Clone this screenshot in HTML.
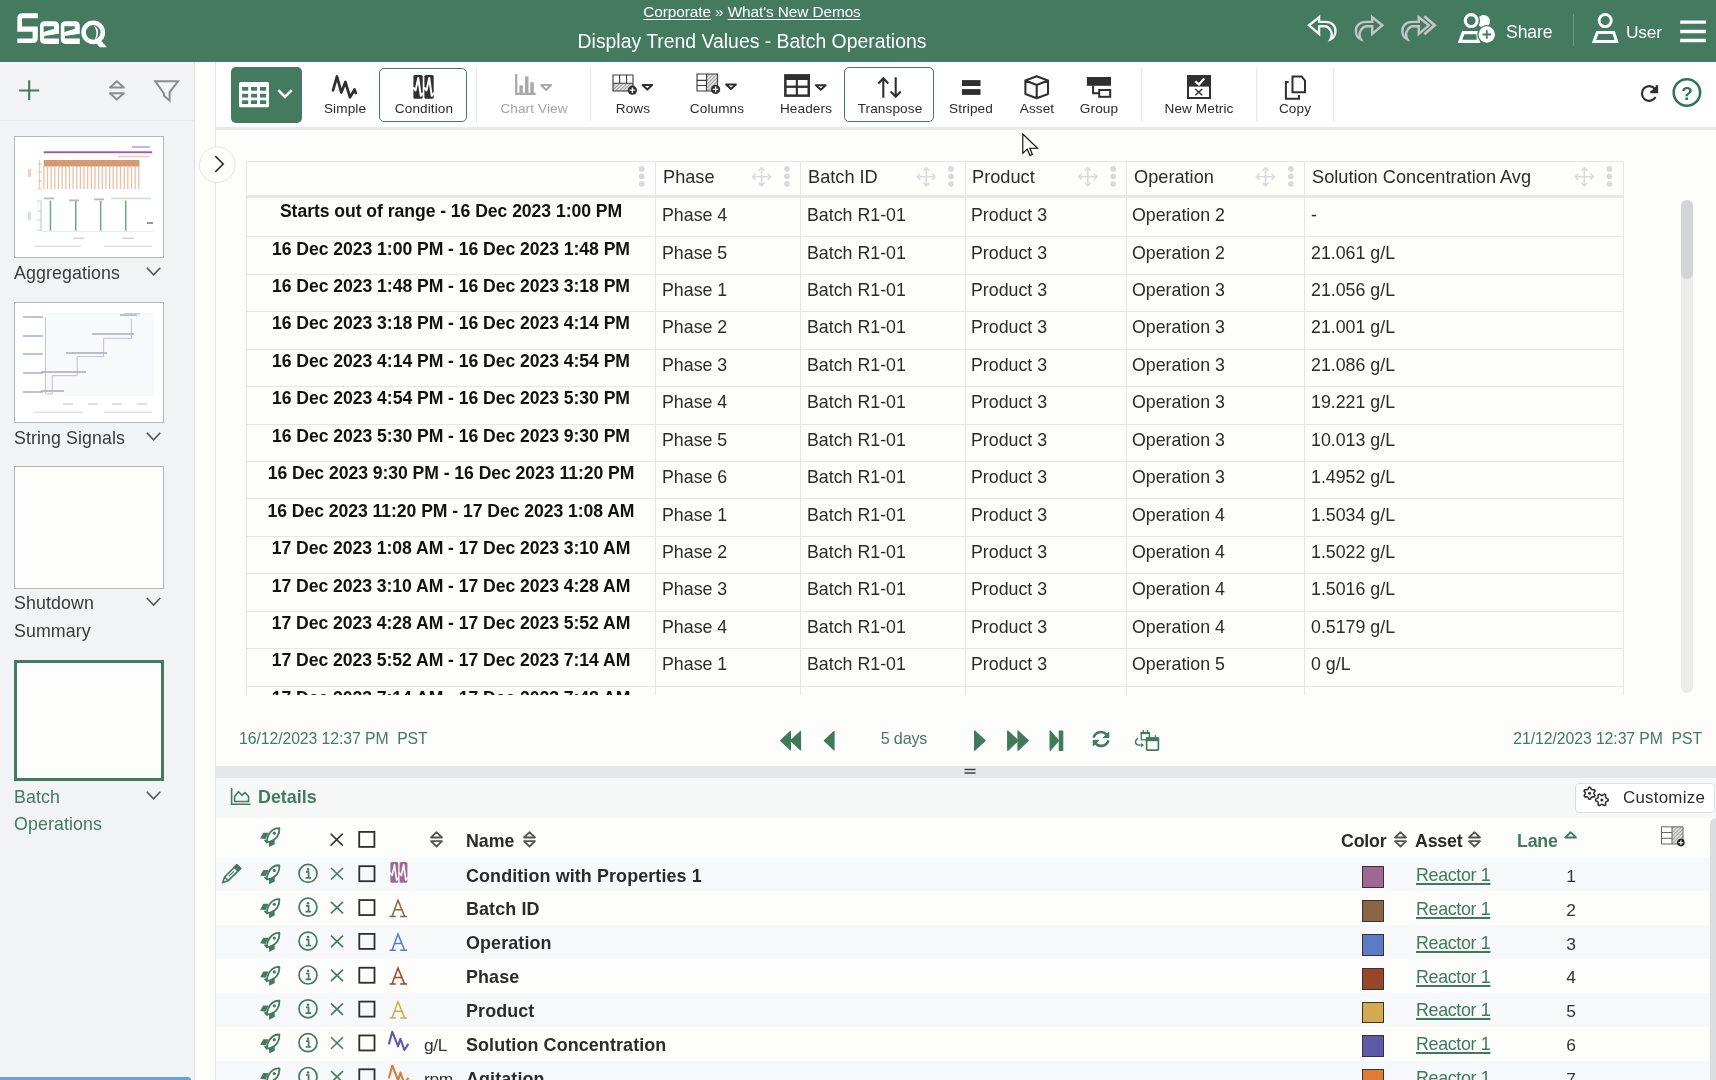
<!DOCTYPE html>
<html><head><meta charset="utf-8">
<style>
*{box-sizing:border-box;margin:0;padding:0}
html,body{width:1716px;height:1080px;overflow:hidden;background:#fdfdfc;font-family:"Liberation Sans",sans-serif;color:#2b2b2b}
.a{position:absolute}
.t{white-space:nowrap;line-height:1;will-change:transform}
u{text-decoration-thickness:1.6px;text-underline-offset:2px;text-decoration-skip-ink:none}
svg{position:absolute;left:0;top:0}
</style></head><body>
<div class="a" style="left:0px;top:0px;width:1716px;height:62px;background:#437a60;"></div>
<div class="a" style="left:0px;top:62px;width:194px;height:1018px;background:#f1f3f5;"></div>
<div class="a" style="left:0px;top:120px;width:194px;height:1px;background:#e8eaec;"></div>
<div class="a" style="left:194px;top:62px;width:1px;height:1018px;background:#dcdee1;"></div>
<div class="a" style="left:195px;top:62px;width:20px;height:1018px;background:#fdfdfc;"></div>
<div class="a" style="left:215px;top:62px;width:1px;height:1018px;background:#e3e5e8;"></div>
<div class="a" style="left:216px;top:62px;width:1500px;height:65px;background:#ffffff;"></div>
<div class="a" style="left:216px;top:127px;width:1500px;height:3px;background:#e8e9eb;"></div>
<div class="a t" style="left:252.00px;width:1000px;text-align:center;top:3.90px;font-size:15.4px;color:#ffffff;letter-spacing:-0.1px;"><u style="text-decoration-thickness:1px">Corporate</u> » <u style="text-decoration-thickness:1px">What's New Demos</u></div>
<div class="a t" style="left:252.00px;width:1000px;text-align:center;top:32.10px;font-size:19.4px;color:#ffffff;">Display Trend Values - Batch Operations</div>
<div class="a t" style="left:1505.60px;top:24.30px;font-size:17.6px;color:#ffffff;letter-spacing:-0.1px;">Share</div>
<div class="a t" style="left:1626.00px;top:24.40px;font-size:17.4px;color:#ffffff;letter-spacing:-0.2px;">User</div>
<div class="a" style="left:1573px;top:14px;width:1px;height:32px;background:#6d9783;"></div>
<div class="a t" style="left:14.40px;top:265.40px;font-size:17.8px;color:#3a3a3a;letter-spacing:0.1px;">Aggregations</div>
<div class="a t" style="left:14.40px;top:430.40px;font-size:17.8px;color:#3a3a3a;letter-spacing:0.1px;">String Signals</div>
<div class="a t" style="left:14.40px;top:595.40px;font-size:17.8px;color:#3a3a3a;letter-spacing:0.1px;">Shutdown</div>
<div class="a t" style="left:14.40px;top:623.40px;font-size:17.8px;color:#3a3a3a;letter-spacing:0.1px;">Summary</div>
<div class="a t" style="left:14.40px;top:788.70px;font-size:17.8px;color:#437a60;letter-spacing:0.1px;">Batch</div>
<div class="a t" style="left:14.40px;top:815.70px;font-size:17.8px;color:#437a60;letter-spacing:0.1px;">Operations</div>
<div class="a" style="left:14px;top:136px;width:150px;height:122px;background:#fff;border:1px solid #b5b7ba"></div>
<div class="a" style="left:14px;top:302px;width:150px;height:121px;background:#fff;border:1px solid #b5b7ba"></div>
<div class="a" style="left:14px;top:466px;width:150px;height:123px;background:#fdfdfc;border:1px solid #b5b7ba"></div>
<div class="a" style="left:14px;top:660px;width:150px;height:121px;background:#fdfdfc;border:3px solid #437a60"></div>
<div class="a" style="left:0px;top:1077px;width:191px;height:3px;background:#63a2e8;border-radius:0 4px 0 0"></div>
<div class="a t" style="left:-155.30px;width:1000px;text-align:center;top:102.00px;font-size:13.6px;color:#2b2b2b;letter-spacing:0.1px;">Simple</div>
<div class="a t" style="left:-76.50px;width:1000px;text-align:center;top:102.00px;font-size:13.6px;color:#2b2b2b;letter-spacing:0.1px;">Condition</div>
<div class="a t" style="left:33.50px;width:1000px;text-align:center;top:102.00px;font-size:13.6px;color:#a5a5a5;letter-spacing:0.1px;">Chart View</div>
<div class="a t" style="left:133.10px;width:1000px;text-align:center;top:102.00px;font-size:13.6px;color:#2b2b2b;letter-spacing:0.1px;">Rows</div>
<div class="a t" style="left:216.70px;width:1000px;text-align:center;top:102.00px;font-size:13.6px;color:#2b2b2b;letter-spacing:0.1px;">Columns</div>
<div class="a t" style="left:305.60px;width:1000px;text-align:center;top:102.00px;font-size:13.6px;color:#2b2b2b;letter-spacing:0.1px;">Headers</div>
<div class="a t" style="left:389.50px;width:1000px;text-align:center;top:102.00px;font-size:13.6px;color:#2b2b2b;letter-spacing:0.1px;">Transpose</div>
<div class="a t" style="left:470.90px;width:1000px;text-align:center;top:102.00px;font-size:13.6px;color:#2b2b2b;letter-spacing:0.1px;">Striped</div>
<div class="a t" style="left:536.50px;width:1000px;text-align:center;top:102.00px;font-size:13.6px;color:#2b2b2b;letter-spacing:0.1px;">Asset</div>
<div class="a t" style="left:599.00px;width:1000px;text-align:center;top:102.00px;font-size:13.6px;color:#2b2b2b;letter-spacing:0.1px;">Group</div>
<div class="a t" style="left:698.50px;width:1000px;text-align:center;top:102.00px;font-size:13.6px;color:#2b2b2b;letter-spacing:0.1px;">New Metric</div>
<div class="a t" style="left:795.00px;width:1000px;text-align:center;top:102.00px;font-size:13.6px;color:#2b2b2b;letter-spacing:0.1px;">Copy</div>
<div class="a" style="left:231px;top:67px;width:71px;height:56px;background:#437a60;border-radius:5px"></div>
<div class="a" style="left:379px;top:68px;width:88px;height:54px;border:1.4px solid #437a60;border-radius:5px"></div>
<div class="a" style="left:844px;top:67px;width:90px;height:55px;border:1.4px solid #437a60;border-radius:5px"></div>
<div class="a" style="left:476px;top:68px;width:1px;height:54px;background:#e6e7e9;"></div>
<div class="a" style="left:590px;top:68px;width:1px;height:54px;background:#e6e7e9;"></div>
<div class="a" style="left:1141px;top:68px;width:1px;height:54px;background:#e6e7e9;"></div>
<div class="a" style="left:1256px;top:68px;width:1px;height:54px;background:#e6e7e9;"></div>
<div class="a" style="left:1333px;top:68px;width:1px;height:54px;background:#e6e7e9;"></div>
<div class="a t" style="left:1187.00px;width:1000px;text-align:center;top:83.90px;font-size:19px;color:#2f7556;font-weight:bold;">?</div>
<div class="a" style="left:0;top:0;width:1716px;height:694.7px;overflow:hidden">
<div class="a" style="left:246px;top:161px;width:1378px;height:34px;border:1px solid #e4e6e9;border-bottom:none;background:#fdfdfc"></div>
<div class="a" style="left:246px;top:195px;width:1378px;height:3px;background:#e6e7e9;"></div>
<div class="a" style="left:246.0px;top:198.0px;width:1px;height:37.43px;background:#e4e6e9;"></div>
<div class="a" style="left:655.0px;top:198.0px;width:1px;height:37.43px;background:#e4e6e9;"></div>
<div class="a" style="left:800.0px;top:198.0px;width:1px;height:37.43px;background:#e4e6e9;"></div>
<div class="a" style="left:965.0px;top:198.0px;width:1px;height:37.43px;background:#e4e6e9;"></div>
<div class="a" style="left:1126.0px;top:198.0px;width:1px;height:37.43px;background:#e4e6e9;"></div>
<div class="a" style="left:1304.0px;top:198.0px;width:1px;height:37.43px;background:#e4e6e9;"></div>
<div class="a" style="left:1623.0px;top:198.0px;width:1px;height:37.43px;background:#e4e6e9;"></div>
<div class="a" style="left:246px;top:236px;width:1378px;height:1px;background:#e4e6e9;"></div>
<div class="a t" style="left:-49.50px;width:1000px;text-align:center;top:203.20px;font-size:17.6px;color:#111;font-weight:bold;letter-spacing:-0.05px;">Starts out of range - 16 Dec 2023 1:00 PM</div>
<div class="a t" style="left:661.50px;top:207.10px;font-size:17.8px;color:#2b2b2b;">Phase 4</div>
<div class="a t" style="left:806.50px;top:207.10px;font-size:17.8px;color:#2b2b2b;">Batch R1-01</div>
<div class="a t" style="left:970.80px;top:207.10px;font-size:17.8px;color:#2b2b2b;">Product 3</div>
<div class="a t" style="left:1132.00px;top:207.10px;font-size:17.8px;color:#2b2b2b;">Operation 2</div>
<div class="a t" style="left:1310.50px;top:207.10px;font-size:17.8px;color:#2b2b2b;">-</div>
<div class="a" style="left:246.0px;top:235.4px;width:1px;height:37.43px;background:#e4e6e9;"></div>
<div class="a" style="left:655.0px;top:235.4px;width:1px;height:37.43px;background:#e4e6e9;"></div>
<div class="a" style="left:800.0px;top:235.4px;width:1px;height:37.43px;background:#e4e6e9;"></div>
<div class="a" style="left:965.0px;top:235.4px;width:1px;height:37.43px;background:#e4e6e9;"></div>
<div class="a" style="left:1126.0px;top:235.4px;width:1px;height:37.43px;background:#e4e6e9;"></div>
<div class="a" style="left:1304.0px;top:235.4px;width:1px;height:37.43px;background:#e4e6e9;"></div>
<div class="a" style="left:1623.0px;top:235.4px;width:1px;height:37.43px;background:#e4e6e9;"></div>
<div class="a" style="left:246px;top:274px;width:1378px;height:1px;background:#e4e6e9;"></div>
<div class="a t" style="left:-49.50px;width:1000px;text-align:center;top:240.63px;font-size:17.6px;color:#111;font-weight:bold;letter-spacing:-0.05px;">16 Dec 2023 1:00 PM - 16 Dec 2023 1:48 PM</div>
<div class="a t" style="left:661.50px;top:244.53px;font-size:17.8px;color:#2b2b2b;">Phase 5</div>
<div class="a t" style="left:806.50px;top:244.53px;font-size:17.8px;color:#2b2b2b;">Batch R1-01</div>
<div class="a t" style="left:970.80px;top:244.53px;font-size:17.8px;color:#2b2b2b;">Product 3</div>
<div class="a t" style="left:1132.00px;top:244.53px;font-size:17.8px;color:#2b2b2b;">Operation 2</div>
<div class="a t" style="left:1310.50px;top:244.53px;font-size:17.8px;color:#2b2b2b;">21.061 g/L</div>
<div class="a" style="left:246.0px;top:272.9px;width:1px;height:37.43px;background:#e4e6e9;"></div>
<div class="a" style="left:655.0px;top:272.9px;width:1px;height:37.43px;background:#e4e6e9;"></div>
<div class="a" style="left:800.0px;top:272.9px;width:1px;height:37.43px;background:#e4e6e9;"></div>
<div class="a" style="left:965.0px;top:272.9px;width:1px;height:37.43px;background:#e4e6e9;"></div>
<div class="a" style="left:1126.0px;top:272.9px;width:1px;height:37.43px;background:#e4e6e9;"></div>
<div class="a" style="left:1304.0px;top:272.9px;width:1px;height:37.43px;background:#e4e6e9;"></div>
<div class="a" style="left:1623.0px;top:272.9px;width:1px;height:37.43px;background:#e4e6e9;"></div>
<div class="a" style="left:246px;top:311px;width:1378px;height:1px;background:#e4e6e9;"></div>
<div class="a t" style="left:-49.50px;width:1000px;text-align:center;top:278.06px;font-size:17.6px;color:#111;font-weight:bold;letter-spacing:-0.05px;">16 Dec 2023 1:48 PM - 16 Dec 2023 3:18 PM</div>
<div class="a t" style="left:661.50px;top:281.96px;font-size:17.8px;color:#2b2b2b;">Phase 1</div>
<div class="a t" style="left:806.50px;top:281.96px;font-size:17.8px;color:#2b2b2b;">Batch R1-01</div>
<div class="a t" style="left:970.80px;top:281.96px;font-size:17.8px;color:#2b2b2b;">Product 3</div>
<div class="a t" style="left:1132.00px;top:281.96px;font-size:17.8px;color:#2b2b2b;">Operation 3</div>
<div class="a t" style="left:1310.50px;top:281.96px;font-size:17.8px;color:#2b2b2b;">21.056 g/L</div>
<div class="a" style="left:246.0px;top:310.3px;width:1px;height:37.43px;background:#e4e6e9;"></div>
<div class="a" style="left:655.0px;top:310.3px;width:1px;height:37.43px;background:#e4e6e9;"></div>
<div class="a" style="left:800.0px;top:310.3px;width:1px;height:37.43px;background:#e4e6e9;"></div>
<div class="a" style="left:965.0px;top:310.3px;width:1px;height:37.43px;background:#e4e6e9;"></div>
<div class="a" style="left:1126.0px;top:310.3px;width:1px;height:37.43px;background:#e4e6e9;"></div>
<div class="a" style="left:1304.0px;top:310.3px;width:1px;height:37.43px;background:#e4e6e9;"></div>
<div class="a" style="left:1623.0px;top:310.3px;width:1px;height:37.43px;background:#e4e6e9;"></div>
<div class="a" style="left:246px;top:349px;width:1378px;height:1px;background:#e4e6e9;"></div>
<div class="a t" style="left:-49.50px;width:1000px;text-align:center;top:315.49px;font-size:17.6px;color:#111;font-weight:bold;letter-spacing:-0.05px;">16 Dec 2023 3:18 PM - 16 Dec 2023 4:14 PM</div>
<div class="a t" style="left:661.50px;top:319.39px;font-size:17.8px;color:#2b2b2b;">Phase 2</div>
<div class="a t" style="left:806.50px;top:319.39px;font-size:17.8px;color:#2b2b2b;">Batch R1-01</div>
<div class="a t" style="left:970.80px;top:319.39px;font-size:17.8px;color:#2b2b2b;">Product 3</div>
<div class="a t" style="left:1132.00px;top:319.39px;font-size:17.8px;color:#2b2b2b;">Operation 3</div>
<div class="a t" style="left:1310.50px;top:319.39px;font-size:17.8px;color:#2b2b2b;">21.001 g/L</div>
<div class="a" style="left:246.0px;top:347.7px;width:1px;height:37.43px;background:#e4e6e9;"></div>
<div class="a" style="left:655.0px;top:347.7px;width:1px;height:37.43px;background:#e4e6e9;"></div>
<div class="a" style="left:800.0px;top:347.7px;width:1px;height:37.43px;background:#e4e6e9;"></div>
<div class="a" style="left:965.0px;top:347.7px;width:1px;height:37.43px;background:#e4e6e9;"></div>
<div class="a" style="left:1126.0px;top:347.7px;width:1px;height:37.43px;background:#e4e6e9;"></div>
<div class="a" style="left:1304.0px;top:347.7px;width:1px;height:37.43px;background:#e4e6e9;"></div>
<div class="a" style="left:1623.0px;top:347.7px;width:1px;height:37.43px;background:#e4e6e9;"></div>
<div class="a" style="left:246px;top:386px;width:1378px;height:1px;background:#e4e6e9;"></div>
<div class="a t" style="left:-49.50px;width:1000px;text-align:center;top:352.92px;font-size:17.6px;color:#111;font-weight:bold;letter-spacing:-0.05px;">16 Dec 2023 4:14 PM - 16 Dec 2023 4:54 PM</div>
<div class="a t" style="left:661.50px;top:356.82px;font-size:17.8px;color:#2b2b2b;">Phase 3</div>
<div class="a t" style="left:806.50px;top:356.82px;font-size:17.8px;color:#2b2b2b;">Batch R1-01</div>
<div class="a t" style="left:970.80px;top:356.82px;font-size:17.8px;color:#2b2b2b;">Product 3</div>
<div class="a t" style="left:1132.00px;top:356.82px;font-size:17.8px;color:#2b2b2b;">Operation 3</div>
<div class="a t" style="left:1310.50px;top:356.82px;font-size:17.8px;color:#2b2b2b;">21.086 g/L</div>
<div class="a" style="left:246.0px;top:385.1px;width:1px;height:37.43px;background:#e4e6e9;"></div>
<div class="a" style="left:655.0px;top:385.1px;width:1px;height:37.43px;background:#e4e6e9;"></div>
<div class="a" style="left:800.0px;top:385.1px;width:1px;height:37.43px;background:#e4e6e9;"></div>
<div class="a" style="left:965.0px;top:385.1px;width:1px;height:37.43px;background:#e4e6e9;"></div>
<div class="a" style="left:1126.0px;top:385.1px;width:1px;height:37.43px;background:#e4e6e9;"></div>
<div class="a" style="left:1304.0px;top:385.1px;width:1px;height:37.43px;background:#e4e6e9;"></div>
<div class="a" style="left:1623.0px;top:385.1px;width:1px;height:37.43px;background:#e4e6e9;"></div>
<div class="a" style="left:246px;top:424px;width:1378px;height:1px;background:#e4e6e9;"></div>
<div class="a t" style="left:-49.50px;width:1000px;text-align:center;top:390.35px;font-size:17.6px;color:#111;font-weight:bold;letter-spacing:-0.05px;">16 Dec 2023 4:54 PM - 16 Dec 2023 5:30 PM</div>
<div class="a t" style="left:661.50px;top:394.25px;font-size:17.8px;color:#2b2b2b;">Phase 4</div>
<div class="a t" style="left:806.50px;top:394.25px;font-size:17.8px;color:#2b2b2b;">Batch R1-01</div>
<div class="a t" style="left:970.80px;top:394.25px;font-size:17.8px;color:#2b2b2b;">Product 3</div>
<div class="a t" style="left:1132.00px;top:394.25px;font-size:17.8px;color:#2b2b2b;">Operation 3</div>
<div class="a t" style="left:1310.50px;top:394.25px;font-size:17.8px;color:#2b2b2b;">19.221 g/L</div>
<div class="a" style="left:246.0px;top:422.6px;width:1px;height:37.43px;background:#e4e6e9;"></div>
<div class="a" style="left:655.0px;top:422.6px;width:1px;height:37.43px;background:#e4e6e9;"></div>
<div class="a" style="left:800.0px;top:422.6px;width:1px;height:37.43px;background:#e4e6e9;"></div>
<div class="a" style="left:965.0px;top:422.6px;width:1px;height:37.43px;background:#e4e6e9;"></div>
<div class="a" style="left:1126.0px;top:422.6px;width:1px;height:37.43px;background:#e4e6e9;"></div>
<div class="a" style="left:1304.0px;top:422.6px;width:1px;height:37.43px;background:#e4e6e9;"></div>
<div class="a" style="left:1623.0px;top:422.6px;width:1px;height:37.43px;background:#e4e6e9;"></div>
<div class="a" style="left:246px;top:461px;width:1378px;height:1px;background:#e4e6e9;"></div>
<div class="a t" style="left:-49.50px;width:1000px;text-align:center;top:427.78px;font-size:17.6px;color:#111;font-weight:bold;letter-spacing:-0.05px;">16 Dec 2023 5:30 PM - 16 Dec 2023 9:30 PM</div>
<div class="a t" style="left:661.50px;top:431.68px;font-size:17.8px;color:#2b2b2b;">Phase 5</div>
<div class="a t" style="left:806.50px;top:431.68px;font-size:17.8px;color:#2b2b2b;">Batch R1-01</div>
<div class="a t" style="left:970.80px;top:431.68px;font-size:17.8px;color:#2b2b2b;">Product 3</div>
<div class="a t" style="left:1132.00px;top:431.68px;font-size:17.8px;color:#2b2b2b;">Operation 3</div>
<div class="a t" style="left:1310.50px;top:431.68px;font-size:17.8px;color:#2b2b2b;">10.013 g/L</div>
<div class="a" style="left:246.0px;top:460.0px;width:1px;height:37.43px;background:#e4e6e9;"></div>
<div class="a" style="left:655.0px;top:460.0px;width:1px;height:37.43px;background:#e4e6e9;"></div>
<div class="a" style="left:800.0px;top:460.0px;width:1px;height:37.43px;background:#e4e6e9;"></div>
<div class="a" style="left:965.0px;top:460.0px;width:1px;height:37.43px;background:#e4e6e9;"></div>
<div class="a" style="left:1126.0px;top:460.0px;width:1px;height:37.43px;background:#e4e6e9;"></div>
<div class="a" style="left:1304.0px;top:460.0px;width:1px;height:37.43px;background:#e4e6e9;"></div>
<div class="a" style="left:1623.0px;top:460.0px;width:1px;height:37.43px;background:#e4e6e9;"></div>
<div class="a" style="left:246px;top:498px;width:1378px;height:1px;background:#e4e6e9;"></div>
<div class="a t" style="left:-49.50px;width:1000px;text-align:center;top:465.21px;font-size:17.6px;color:#111;font-weight:bold;letter-spacing:-0.05px;">16 Dec 2023 9:30 PM - 16 Dec 2023 11:20 PM</div>
<div class="a t" style="left:661.50px;top:469.11px;font-size:17.8px;color:#2b2b2b;">Phase 6</div>
<div class="a t" style="left:806.50px;top:469.11px;font-size:17.8px;color:#2b2b2b;">Batch R1-01</div>
<div class="a t" style="left:970.80px;top:469.11px;font-size:17.8px;color:#2b2b2b;">Product 3</div>
<div class="a t" style="left:1132.00px;top:469.11px;font-size:17.8px;color:#2b2b2b;">Operation 3</div>
<div class="a t" style="left:1310.50px;top:469.11px;font-size:17.8px;color:#2b2b2b;">1.4952 g/L</div>
<div class="a" style="left:246.0px;top:497.4px;width:1px;height:37.43px;background:#e4e6e9;"></div>
<div class="a" style="left:655.0px;top:497.4px;width:1px;height:37.43px;background:#e4e6e9;"></div>
<div class="a" style="left:800.0px;top:497.4px;width:1px;height:37.43px;background:#e4e6e9;"></div>
<div class="a" style="left:965.0px;top:497.4px;width:1px;height:37.43px;background:#e4e6e9;"></div>
<div class="a" style="left:1126.0px;top:497.4px;width:1px;height:37.43px;background:#e4e6e9;"></div>
<div class="a" style="left:1304.0px;top:497.4px;width:1px;height:37.43px;background:#e4e6e9;"></div>
<div class="a" style="left:1623.0px;top:497.4px;width:1px;height:37.43px;background:#e4e6e9;"></div>
<div class="a" style="left:246px;top:536px;width:1378px;height:1px;background:#e4e6e9;"></div>
<div class="a t" style="left:-49.50px;width:1000px;text-align:center;top:502.64px;font-size:17.6px;color:#111;font-weight:bold;letter-spacing:-0.05px;">16 Dec 2023 11:20 PM - 17 Dec 2023 1:08 AM</div>
<div class="a t" style="left:661.50px;top:506.54px;font-size:17.8px;color:#2b2b2b;">Phase 1</div>
<div class="a t" style="left:806.50px;top:506.54px;font-size:17.8px;color:#2b2b2b;">Batch R1-01</div>
<div class="a t" style="left:970.80px;top:506.54px;font-size:17.8px;color:#2b2b2b;">Product 3</div>
<div class="a t" style="left:1132.00px;top:506.54px;font-size:17.8px;color:#2b2b2b;">Operation 4</div>
<div class="a t" style="left:1310.50px;top:506.54px;font-size:17.8px;color:#2b2b2b;">1.5034 g/L</div>
<div class="a" style="left:246.0px;top:534.9px;width:1px;height:37.43px;background:#e4e6e9;"></div>
<div class="a" style="left:655.0px;top:534.9px;width:1px;height:37.43px;background:#e4e6e9;"></div>
<div class="a" style="left:800.0px;top:534.9px;width:1px;height:37.43px;background:#e4e6e9;"></div>
<div class="a" style="left:965.0px;top:534.9px;width:1px;height:37.43px;background:#e4e6e9;"></div>
<div class="a" style="left:1126.0px;top:534.9px;width:1px;height:37.43px;background:#e4e6e9;"></div>
<div class="a" style="left:1304.0px;top:534.9px;width:1px;height:37.43px;background:#e4e6e9;"></div>
<div class="a" style="left:1623.0px;top:534.9px;width:1px;height:37.43px;background:#e4e6e9;"></div>
<div class="a" style="left:246px;top:573px;width:1378px;height:1px;background:#e4e6e9;"></div>
<div class="a t" style="left:-49.50px;width:1000px;text-align:center;top:540.07px;font-size:17.6px;color:#111;font-weight:bold;letter-spacing:-0.05px;">17 Dec 2023 1:08 AM - 17 Dec 2023 3:10 AM</div>
<div class="a t" style="left:661.50px;top:543.97px;font-size:17.8px;color:#2b2b2b;">Phase 2</div>
<div class="a t" style="left:806.50px;top:543.97px;font-size:17.8px;color:#2b2b2b;">Batch R1-01</div>
<div class="a t" style="left:970.80px;top:543.97px;font-size:17.8px;color:#2b2b2b;">Product 3</div>
<div class="a t" style="left:1132.00px;top:543.97px;font-size:17.8px;color:#2b2b2b;">Operation 4</div>
<div class="a t" style="left:1310.50px;top:543.97px;font-size:17.8px;color:#2b2b2b;">1.5022 g/L</div>
<div class="a" style="left:246.0px;top:572.3px;width:1px;height:37.43px;background:#e4e6e9;"></div>
<div class="a" style="left:655.0px;top:572.3px;width:1px;height:37.43px;background:#e4e6e9;"></div>
<div class="a" style="left:800.0px;top:572.3px;width:1px;height:37.43px;background:#e4e6e9;"></div>
<div class="a" style="left:965.0px;top:572.3px;width:1px;height:37.43px;background:#e4e6e9;"></div>
<div class="a" style="left:1126.0px;top:572.3px;width:1px;height:37.43px;background:#e4e6e9;"></div>
<div class="a" style="left:1304.0px;top:572.3px;width:1px;height:37.43px;background:#e4e6e9;"></div>
<div class="a" style="left:1623.0px;top:572.3px;width:1px;height:37.43px;background:#e4e6e9;"></div>
<div class="a" style="left:246px;top:611px;width:1378px;height:1px;background:#e4e6e9;"></div>
<div class="a t" style="left:-49.50px;width:1000px;text-align:center;top:577.50px;font-size:17.6px;color:#111;font-weight:bold;letter-spacing:-0.05px;">17 Dec 2023 3:10 AM - 17 Dec 2023 4:28 AM</div>
<div class="a t" style="left:661.50px;top:581.40px;font-size:17.8px;color:#2b2b2b;">Phase 3</div>
<div class="a t" style="left:806.50px;top:581.40px;font-size:17.8px;color:#2b2b2b;">Batch R1-01</div>
<div class="a t" style="left:970.80px;top:581.40px;font-size:17.8px;color:#2b2b2b;">Product 3</div>
<div class="a t" style="left:1132.00px;top:581.40px;font-size:17.8px;color:#2b2b2b;">Operation 4</div>
<div class="a t" style="left:1310.50px;top:581.40px;font-size:17.8px;color:#2b2b2b;">1.5016 g/L</div>
<div class="a" style="left:246.0px;top:609.7px;width:1px;height:37.43px;background:#e4e6e9;"></div>
<div class="a" style="left:655.0px;top:609.7px;width:1px;height:37.43px;background:#e4e6e9;"></div>
<div class="a" style="left:800.0px;top:609.7px;width:1px;height:37.43px;background:#e4e6e9;"></div>
<div class="a" style="left:965.0px;top:609.7px;width:1px;height:37.43px;background:#e4e6e9;"></div>
<div class="a" style="left:1126.0px;top:609.7px;width:1px;height:37.43px;background:#e4e6e9;"></div>
<div class="a" style="left:1304.0px;top:609.7px;width:1px;height:37.43px;background:#e4e6e9;"></div>
<div class="a" style="left:1623.0px;top:609.7px;width:1px;height:37.43px;background:#e4e6e9;"></div>
<div class="a" style="left:246px;top:648px;width:1378px;height:1px;background:#e4e6e9;"></div>
<div class="a t" style="left:-49.50px;width:1000px;text-align:center;top:614.93px;font-size:17.6px;color:#111;font-weight:bold;letter-spacing:-0.05px;">17 Dec 2023 4:28 AM - 17 Dec 2023 5:52 AM</div>
<div class="a t" style="left:661.50px;top:618.83px;font-size:17.8px;color:#2b2b2b;">Phase 4</div>
<div class="a t" style="left:806.50px;top:618.83px;font-size:17.8px;color:#2b2b2b;">Batch R1-01</div>
<div class="a t" style="left:970.80px;top:618.83px;font-size:17.8px;color:#2b2b2b;">Product 3</div>
<div class="a t" style="left:1132.00px;top:618.83px;font-size:17.8px;color:#2b2b2b;">Operation 4</div>
<div class="a t" style="left:1310.50px;top:618.83px;font-size:17.8px;color:#2b2b2b;">0.5179 g/L</div>
<div class="a" style="left:246.0px;top:647.2px;width:1px;height:37.43px;background:#e4e6e9;"></div>
<div class="a" style="left:655.0px;top:647.2px;width:1px;height:37.43px;background:#e4e6e9;"></div>
<div class="a" style="left:800.0px;top:647.2px;width:1px;height:37.43px;background:#e4e6e9;"></div>
<div class="a" style="left:965.0px;top:647.2px;width:1px;height:37.43px;background:#e4e6e9;"></div>
<div class="a" style="left:1126.0px;top:647.2px;width:1px;height:37.43px;background:#e4e6e9;"></div>
<div class="a" style="left:1304.0px;top:647.2px;width:1px;height:37.43px;background:#e4e6e9;"></div>
<div class="a" style="left:1623.0px;top:647.2px;width:1px;height:37.43px;background:#e4e6e9;"></div>
<div class="a" style="left:246px;top:686px;width:1378px;height:1px;background:#e4e6e9;"></div>
<div class="a t" style="left:-49.50px;width:1000px;text-align:center;top:652.36px;font-size:17.6px;color:#111;font-weight:bold;letter-spacing:-0.05px;">17 Dec 2023 5:52 AM - 17 Dec 2023 7:14 AM</div>
<div class="a t" style="left:661.50px;top:656.26px;font-size:17.8px;color:#2b2b2b;">Phase 1</div>
<div class="a t" style="left:806.50px;top:656.26px;font-size:17.8px;color:#2b2b2b;">Batch R1-01</div>
<div class="a t" style="left:970.80px;top:656.26px;font-size:17.8px;color:#2b2b2b;">Product 3</div>
<div class="a t" style="left:1132.00px;top:656.26px;font-size:17.8px;color:#2b2b2b;">Operation 5</div>
<div class="a t" style="left:1310.50px;top:656.26px;font-size:17.8px;color:#2b2b2b;">0 g/L</div>
<div class="a" style="left:246.0px;top:684.6px;width:1px;height:37.43px;background:#e4e6e9;"></div>
<div class="a" style="left:655.0px;top:684.6px;width:1px;height:37.43px;background:#e4e6e9;"></div>
<div class="a" style="left:800.0px;top:684.6px;width:1px;height:37.43px;background:#e4e6e9;"></div>
<div class="a" style="left:965.0px;top:684.6px;width:1px;height:37.43px;background:#e4e6e9;"></div>
<div class="a" style="left:1126.0px;top:684.6px;width:1px;height:37.43px;background:#e4e6e9;"></div>
<div class="a" style="left:1304.0px;top:684.6px;width:1px;height:37.43px;background:#e4e6e9;"></div>
<div class="a" style="left:1623.0px;top:684.6px;width:1px;height:37.43px;background:#e4e6e9;"></div>
<div class="a" style="left:246px;top:723px;width:1378px;height:1px;background:#e4e6e9;"></div>
<div class="a t" style="left:-49.50px;width:1000px;text-align:center;top:689.79px;font-size:17.6px;color:#111;font-weight:bold;letter-spacing:-0.05px;">17 Dec 2023 7:14 AM - 17 Dec 2023 7:48 AM</div>
<div class="a t" style="left:661.50px;top:693.69px;font-size:17.8px;color:#2b2b2b;">Phase 2</div>
<div class="a t" style="left:806.50px;top:693.69px;font-size:17.8px;color:#2b2b2b;">Batch R1-01</div>
<div class="a t" style="left:970.80px;top:693.69px;font-size:17.8px;color:#2b2b2b;">Product 3</div>
<div class="a t" style="left:1132.00px;top:693.69px;font-size:17.8px;color:#2b2b2b;">Operation 5</div>
<div class="a t" style="left:1310.50px;top:693.69px;font-size:17.8px;color:#2b2b2b;">0 g/L</div>
</div>
<div class="a" style="left:246.0px;top:161px;width:1px;height:34px;background:#e4e6e9;"></div>
<div class="a" style="left:655.0px;top:161px;width:1px;height:34px;background:#e4e6e9;"></div>
<div class="a" style="left:800.0px;top:161px;width:1px;height:34px;background:#e4e6e9;"></div>
<div class="a" style="left:965.0px;top:161px;width:1px;height:34px;background:#e4e6e9;"></div>
<div class="a" style="left:1126.0px;top:161px;width:1px;height:34px;background:#e4e6e9;"></div>
<div class="a" style="left:1304.0px;top:161px;width:1px;height:34px;background:#e4e6e9;"></div>
<div class="a" style="left:1623.0px;top:161px;width:1px;height:34px;background:#e4e6e9;"></div>
<div class="a t" style="left:663.00px;top:168.40px;font-size:18.2px;color:#2b2b2b;">Phase</div>
<div class="a t" style="left:807.60px;top:168.40px;font-size:18.2px;color:#2b2b2b;">Batch ID</div>
<div class="a t" style="left:972.40px;top:168.40px;font-size:18.2px;color:#2b2b2b;">Product</div>
<div class="a t" style="left:1133.50px;top:168.40px;font-size:18.2px;color:#2b2b2b;">Operation</div>
<div class="a t" style="left:1311.50px;top:168.40px;font-size:18.2px;color:#2b2b2b;">Solution Concentration Avg</div>
<div class="a" style="left:1681px;top:200px;width:12px;height:493px;background:#ececed;border-radius:6px"></div>
<div class="a" style="left:1681px;top:200px;width:12px;height:79px;background:#d3d4d6;border-radius:6px"></div>
<div class="a t" style="left:238.80px;top:730.60px;font-size:15.8px;color:#437a60;letter-spacing:-0.08px;">16/12/2023 12:37 PM&nbsp;&nbsp;PST</div>
<div class="a t" style="left:701.60px;width:1000px;text-align:right;top:730.60px;font-size:15.8px;color:#437a60;letter-spacing:-0.08px;">21/12/2023 12:37 PM&nbsp;&nbsp;PST</div>
<div class="a t" style="left:404.40px;width:1000px;text-align:center;top:729.50px;font-size:16.2px;color:#437a60;letter-spacing:-0.2px;">5 days</div>
<div class="a" style="left:216px;top:765.5px;width:1500px;height:12px;background:#e6e7e9;"></div>
<div class="a" style="left:216px;top:777.5px;width:1500px;height:40px;background:#f6f7f7;"></div>
<div class="a t" style="left:258.40px;top:788.95px;font-size:17.9px;color:#437a60;font-weight:bold;">Details</div>
<div class="a" style="left:1574.7px;top:782.7px;width:140px;height:30px;background:#fff;border:1px solid #dcdee1;border-radius:4px"></div>
<div class="a t" style="left:1623.40px;top:789.85px;font-size:16.9px;color:#2b2b2b;letter-spacing:0.25px;">Customize</div>
<div class="a" style="left:216px;top:817.5px;width:1494px;height:40px;background:#fdfdfc;"></div>
<div class="a t" style="left:466.00px;top:833.00px;font-size:17.8px;color:#2b2b2b;font-weight:bold;">Name</div>
<div class="a t" style="left:1341.00px;top:833.00px;font-size:17.8px;color:#2b2b2b;font-weight:bold;letter-spacing:-0.2px;">Color</div>
<div class="a t" style="left:1415.30px;top:833.00px;font-size:17.8px;color:#2b2b2b;font-weight:bold;letter-spacing:-0.2px;">Asset</div>
<div class="a t" style="left:1516.50px;top:833.00px;font-size:17.8px;color:#437a60;font-weight:bold;letter-spacing:-0.2px;">Lane</div>
<div class="a" style="left:216px;top:857.6px;width:1494px;height:33.9px;background:#f7f8f9;"></div>
<div class="a t" style="left:466.00px;top:867.55px;font-size:17.9px;color:#2b2b2b;font-weight:bold;letter-spacing:0.12px;">Condition with Properties 1</div>
<div class="a" style="left:1362.2px;top:866.2px;width:22.3px;height:21.8px;background:#9e6892;border:1.3px solid #333"></div>
<div class="a t" style="left:1415.60px;top:866.95px;font-size:17.9px;color:#3f7a5c;letter-spacing:-0.35px;"><u style="text-underline-offset:1.5px">Reactor 1</u></div>
<div class="a t" style="left:1071.00px;width:1000px;text-align:center;top:867.80px;font-size:17.4px;color:#333;">1</div>
<div class="a t" style="left:466.00px;top:901.40px;font-size:17.9px;color:#2b2b2b;font-weight:bold;letter-spacing:0.12px;">Batch ID</div>
<div class="a" style="left:1362.2px;top:900.1px;width:22.3px;height:21.8px;background:#8b6443;border:1.3px solid #333"></div>
<div class="a t" style="left:1415.60px;top:900.80px;font-size:17.9px;color:#3f7a5c;letter-spacing:-0.35px;"><u style="text-underline-offset:1.5px">Reactor 1</u></div>
<div class="a t" style="left:1071.00px;width:1000px;text-align:center;top:901.65px;font-size:17.4px;color:#333;">2</div>
<div class="a" style="left:216px;top:925.3px;width:1494px;height:33.9px;background:#f7f8f9;"></div>
<div class="a t" style="left:466.00px;top:935.25px;font-size:17.9px;color:#2b2b2b;font-weight:bold;letter-spacing:0.12px;">Operation</div>
<div class="a" style="left:1362.2px;top:933.9px;width:22.3px;height:21.8px;background:#5b7bc8;border:1.3px solid #333"></div>
<div class="a t" style="left:1415.60px;top:934.65px;font-size:17.9px;color:#3f7a5c;letter-spacing:-0.35px;"><u style="text-underline-offset:1.5px">Reactor 1</u></div>
<div class="a t" style="left:1071.00px;width:1000px;text-align:center;top:935.50px;font-size:17.4px;color:#333;">3</div>
<div class="a t" style="left:466.00px;top:969.10px;font-size:17.9px;color:#2b2b2b;font-weight:bold;letter-spacing:0.12px;">Phase</div>
<div class="a" style="left:1362.2px;top:967.8px;width:22.3px;height:21.8px;background:#9a4527;border:1.3px solid #333"></div>
<div class="a t" style="left:1415.60px;top:968.50px;font-size:17.9px;color:#3f7a5c;letter-spacing:-0.35px;"><u style="text-underline-offset:1.5px">Reactor 1</u></div>
<div class="a t" style="left:1071.00px;width:1000px;text-align:center;top:969.35px;font-size:17.4px;color:#333;">4</div>
<div class="a" style="left:216px;top:993.0px;width:1494px;height:33.9px;background:#f7f8f9;"></div>
<div class="a t" style="left:466.00px;top:1002.95px;font-size:17.9px;color:#2b2b2b;font-weight:bold;letter-spacing:0.12px;">Product</div>
<div class="a" style="left:1362.2px;top:1001.6px;width:22.3px;height:21.8px;background:#d4aa4e;border:1.3px solid #333"></div>
<div class="a t" style="left:1415.60px;top:1002.35px;font-size:17.9px;color:#3f7a5c;letter-spacing:-0.35px;"><u style="text-underline-offset:1.5px">Reactor 1</u></div>
<div class="a t" style="left:1071.00px;width:1000px;text-align:center;top:1003.20px;font-size:17.4px;color:#333;">5</div>
<div class="a t" style="left:466.00px;top:1036.80px;font-size:17.9px;color:#2b2b2b;font-weight:bold;letter-spacing:0.12px;">Solution Concentration</div>
<div class="a t" style="left:424.30px;top:1037.05px;font-size:17.4px;color:#333;letter-spacing:-0.4px;">g/L</div>
<div class="a" style="left:1362.2px;top:1035.4px;width:22.3px;height:21.8px;background:#5e5aa8;border:1.3px solid #333"></div>
<div class="a t" style="left:1415.60px;top:1036.20px;font-size:17.9px;color:#3f7a5c;letter-spacing:-0.35px;"><u style="text-underline-offset:1.5px">Reactor 1</u></div>
<div class="a t" style="left:1071.00px;width:1000px;text-align:center;top:1037.05px;font-size:17.4px;color:#333;">6</div>
<div class="a" style="left:216px;top:1060.7px;width:1494px;height:33.9px;background:#f7f8f9;"></div>
<div class="a t" style="left:466.00px;top:1070.65px;font-size:17.9px;color:#2b2b2b;font-weight:bold;letter-spacing:0.12px;">Agitation</div>
<div class="a t" style="left:424.30px;top:1070.90px;font-size:17.4px;color:#333;letter-spacing:-0.4px;">rpm</div>
<div class="a" style="left:1362.2px;top:1069.3px;width:22.3px;height:21.8px;background:#e07b35;border:1.3px solid #333"></div>
<div class="a t" style="left:1415.60px;top:1070.05px;font-size:17.9px;color:#3f7a5c;letter-spacing:-0.35px;"><u style="text-underline-offset:1.5px">Reactor 1</u></div>
<div class="a t" style="left:1071.00px;width:1000px;text-align:center;top:1070.90px;font-size:17.4px;color:#333;">7</div>
<div class="a" style="left:1710px;top:818px;width:6px;height:262px;background:#dcddde;border-radius:6px 0 0 0"></div>
<svg width="1716" height="1080" viewBox="0 0 1716 1080"><g fill="#fff" fill-rule="evenodd"><path d="M37.8 13.3H22.3Q17.3 13.3 17.3 18.3V31.8H32.6V38.4H17.3V42.9H32.8Q37.8 42.9 37.8 37.9V26.5H22V18.2H37.8Z"/><path d="M44.6 21.2H54.4Q59 21.2 59 25.8V33.8L44.2 35.9V38.4H59V43.9H44.6Q40 43.9 40 39.3V25.8Q40 21.2 44.6 21.2ZM43.6 26.3H54V28.7L43.6 31.9Z"/><path d="M65.4 21.2H75.2Q79.8 21.2 79.8 25.8V33.8L65 35.9V38.4H79.8V43.9H65.4Q60.8 43.9 60.8 39.3V25.8Q60.8 21.2 65.4 21.2ZM64.4 26.3H74.8V28.7L64.4 31.9Z"/></g><circle cx="93.2" cy="32.4" r="9.6" fill="none" stroke="#fff" stroke-width="4.6"/><path d="M99.5 39L107 47.2H99.8L95.5 42.5Z" fill="#fff"/><path d="M92.8 25.2Q98.5 27 98.2 33Q98 37.5 94.8 39.6Q96.6 36.5 96.4 32.5Q96 27.5 92.8 25.2Z" fill="#fff"/>
<path d="M1309.00 25.30L1319.10 17.30V21.90H1325.50C1332.00 21.90 1335.80 26.00 1335.50 31.50C1335.30 35.30 1333.00 38.20 1330.40 39.30C1331.80 36.80 1332.20 33.50 1330.80 30.80C1329.60 28.30 1327.30 26.20 1324.30 26.20H1319.10V33.80Z" fill="none" stroke="#f2f2f2" stroke-width="2.4" stroke-linejoin="miter"/>
<path d="M1382.35 25.30L1372.25 17.30V21.90H1365.85C1359.35 21.90 1355.55 26.00 1355.85 31.50C1356.05 35.30 1358.35 38.20 1360.95 39.30C1359.55 36.80 1359.15 33.50 1360.55 30.80C1361.75 28.30 1364.05 26.20 1367.05 26.20H1372.25V33.80Z" fill="none" stroke="#c4c6c5" stroke-width="2.4" stroke-linejoin="miter"/>
<path d="M1428.85 25.30L1418.75 17.30V21.90H1412.35C1405.85 21.90 1402.05 26.00 1402.35 31.50C1402.55 35.30 1404.85 38.20 1407.45 39.30C1406.05 36.80 1405.65 33.50 1407.05 30.80C1408.25 28.30 1410.55 26.20 1413.55 26.20H1418.75V33.80Z" fill="none" stroke="#c4c6c5" stroke-width="2.4" stroke-linejoin="miter"/><path d="M1424.3 16.3L1434.6 25.3L1424.3 34.3" fill="none" stroke="#c4c6c5" stroke-width="2.8"/>
<circle cx="1483.7" cy="21.3" r="6.3" fill="#fff"/><circle cx="1471.2" cy="20.6" r="8.9" fill="#437a60"/><circle cx="1471.2" cy="20.6" r="5.95" fill="none" stroke="#fff" stroke-width="3.1"/><path d="M1463.2 32.6H1477.8L1478.6 41.4H1460Z" fill="none" stroke="#fff" stroke-width="3.2" stroke-linejoin="miter"/><circle cx="1486.8" cy="34.5" r="9.6" fill="#437a60"/><circle cx="1486.8" cy="34.5" r="8.2" fill="#fff"/><path d="M1486.8 30.2V38.8M1482.5 34.5H1491.1" stroke="#437a60" stroke-width="1.8"/>
<circle cx="1605.2" cy="20.6" r="6.05" fill="none" stroke="#fff" stroke-width="2.9"/><path d="M1597.3 32.55H1613.7L1616.6 41.5H1594Z" fill="none" stroke="#fff" stroke-width="3" stroke-linejoin="miter"/>
<path d="M1680.2 22.2H1706M1680.2 31.5H1706M1680.2 40.5H1706" stroke="#fff" stroke-width="3.3"/>
<path d="M19.2 90.5H39.2M29.2 80.3V99.9" stroke="#437a60" stroke-width="2.1"/>
<path d="M110 87.5L116.8 81.2L123.8 87.5ZM110 93.2L116.8 99.5L123.8 93.2Z" fill="none" stroke="#8c8c8c" stroke-width="2" stroke-linejoin="round"/>
<path d="M155.3 81.3H178L169.6 92.3V100.5L164 95.8V93.5Z" fill="none" stroke="#8c8c8c" stroke-width="2" stroke-linejoin="miter"/>
<path d="M146.8 267.8L153.6 274.8L160.3 267.8" fill="none" stroke="#555" stroke-width="1.6"/>
<path d="M146.8 432.8L153.6 439.8L160.3 432.8" fill="none" stroke="#555" stroke-width="1.6"/>
<path d="M146.8 598.0L153.6 605.0L160.3 598.0" fill="none" stroke="#555" stroke-width="1.6"/>
<path d="M146.8 791.8L153.6 798.8L160.3 791.8" fill="none" stroke="#555" stroke-width="1.6"/>
<rect x="132" y="146" width="18" height="2" fill="#c9b6dc"/>
<rect x="43.7" y="151.3" width="108.5" height="1.9" fill="#9f56b3"/>
<rect x="118" y="155.5" width="32" height="2" fill="#ecd3c0"/>
<rect x="43.7" y="160" width="95.8" height="6.5" fill="#d49a72"/>
<path d="M43.9 166V189M47.5 166V189M51.2 166V189M54.8 166V189M58.5 166V189M62.1 166V189M65.8 166V189M69.5 166V189M73.1 166V189M76.8 166V189M80.4 166V189M84.0 166V189M87.7 166V189M91.3 166V189M95.0 166V189M98.7 166V189M102.3 166V189M105.9 166V189M109.6 166V189M113.2 166V189M116.9 166V189M120.5 166V189M124.2 166V189M127.8 166V189M131.5 166V189M135.2 166V189M138.8 166V189" stroke="#e9c2a6" stroke-width="1.3"/>
<path d="M39.5 160V189M38 164H42M38 172H42M38 181H42M38 189H42" stroke="#ecc9b0" stroke-width="1.2"/><rect x="28" y="169" width="3" height="8" fill="#efd2bd"/>
<rect x="49.699999999999996" y="200.7" width="1.5" height="30" fill="#6aaa86"/>
<rect x="75.0" y="200.7" width="1.5" height="30" fill="#6aaa86"/>
<rect x="99.89999999999999" y="200.7" width="1.5" height="30" fill="#6aaa86"/>
<rect x="125.0" y="200.7" width="1.5" height="30" fill="#6aaa86"/>
<rect x="43" y="231" width="110" height="1" fill="#e8eaec"/><path d="M41 201V231M37 201H41M37 211H41M37 220H41M37 230H41" stroke="#b9d9c6" stroke-width="1.2"/><rect x="28" y="212" width="3" height="8" fill="#cfe5d8"/>
<rect x="44" y="197.5" width="10" height="1.8" fill="#b8b8b8"/><rect x="69" y="199.5" width="10" height="1.8" fill="#b8b8b8"/><rect x="94" y="198.5" width="10" height="1.8" fill="#b8b8b8"/><rect x="111" y="197.5" width="40" height="1.8" fill="#cfe3d7"/><rect x="147" y="222" width="6" height="2" fill="#999"/>
<rect x="73" y="237.5" width="11" height="1.6" fill="#d6d6d6"/><rect x="122" y="237.5" width="12" height="1.6" fill="#d6d6d6"/>
<rect x="34" y="245.5" width="47" height="1.5" fill="#e3e3e3"/><rect x="104" y="245.5" width="48" height="1.5" fill="#e3e3e3"/>
<rect x="47" y="313" width="107" height="83" fill="#f8f9fb"/>
<path d="M45.5 317V394H52.3V375.6H77.2V356.6H103.6V338.4H131.4V319" fill="none" stroke="#b5bbdc" stroke-width="0.9"/>
<rect x="23" y="316.2" width="20" height="1.6" fill="#aab2e0"/>
<rect x="23" y="335.2" width="20" height="1.6" fill="#aab2e0"/>
<rect x="23" y="353.2" width="20" height="1.6" fill="#aab2e0"/>
<rect x="23" y="372.2" width="20" height="1.6" fill="#aab2e0"/>
<rect x="23" y="391.2" width="20" height="1.6" fill="#aab2e0"/>
<rect x="41" y="390.2" width="23" height="1.6" fill="#b0b0b0"/>
<rect x="41" y="371.2" width="45" height="1.6" fill="#b0b0b0"/>
<rect x="66" y="352.2" width="41" height="1.6" fill="#b0b0b0"/>
<rect x="92" y="333.2" width="42" height="1.6" fill="#b0b0b0"/>
<rect x="120" y="314.2" width="17" height="1.6" fill="#b0b0b0"/>
<rect x="124" y="313" width="16" height="1.5" fill="#c5cbe8"/>
<rect x="63" y="403.3" width="10" height="1.5" fill="#d8d8d8"/><rect x="88" y="403.3" width="10" height="1.5" fill="#d8d8d8"/><rect x="112" y="403.3" width="10" height="1.5" fill="#d8d8d8"/><rect x="137" y="403.3" width="10" height="1.5" fill="#d8d8d8"/>
<rect x="34" y="411.5" width="49" height="1.5" fill="#e3e3e3"/><rect x="104" y="411.5" width="48" height="1.5" fill="#e3e3e3"/>
<circle cx="217.2" cy="164.7" r="17.8" fill="#fdfdfc" stroke="#e1e3e6" stroke-width="1"/>
<path d="M215.3 156.1L223.2 164L215.3 171.9" fill="none" stroke="#222" stroke-width="1.5"/>
<rect x="239" y="82" width="30" height="25.3" rx="1.5" fill="#fff"/>
<rect x="242.1" y="87" width="6.1" height="3.7" fill="#437a60"/>
<rect x="242.1" y="93.8" width="6.1" height="3.7" fill="#437a60"/>
<rect x="242.1" y="100.3" width="6.1" height="3.7" fill="#437a60"/>
<rect x="251" y="87" width="6.1" height="3.7" fill="#437a60"/>
<rect x="251" y="93.8" width="6.1" height="3.7" fill="#437a60"/>
<rect x="251" y="100.3" width="6.1" height="3.7" fill="#437a60"/>
<rect x="260" y="87" width="6.1" height="3.7" fill="#437a60"/>
<rect x="260" y="93.8" width="6.1" height="3.7" fill="#437a60"/>
<rect x="260" y="100.3" width="6.1" height="3.7" fill="#437a60"/>
<path d="M278.3 90.2L285 96.9L291.7 90.2" fill="none" stroke="#fff" stroke-width="2.6"/>
<path d="M333 90.3L337 76.5L341.3 92.5L345.4 82L350 97.3L354.5 89.5L355.8 93" fill="none" stroke="#2f2f2f" stroke-width="2.7" stroke-linejoin="round" stroke-linecap="round"/>
<rect x="413.4" y="74.9" width="9.3" height="23.8" rx="1.5" fill="#2f2f2f"/><rect x="424.4" y="74.9" width="9.3" height="23.8" rx="1.5" fill="#2f2f2f"/>
<path d="M413.40 87.75 L415.55 90.37 L418.26 77.99 L420.78 95.84 L422.74 93.23" fill="none" stroke="#fff" stroke-width="2" stroke-linejoin="round" stroke-linecap="round"/>
<path d="M424.36 87.75 L426.51 90.37 L429.22 77.99 L431.74 95.84 L433.70 93.23" fill="none" stroke="#fff" stroke-width="2" stroke-linejoin="round" stroke-linecap="round"/>
<path d="M516.2 74V93.8H535.6" fill="none" stroke="#a9a9a9" stroke-width="2.3"/><rect x="519.4" y="85.3" width="3.5" height="7.7" fill="#a9a9a9"/><rect x="525" y="76.4" width="3.5" height="16.6" fill="#a9a9a9"/><rect x="530.3" y="82.3" width="3.5" height="10.7" fill="#a9a9a9"/>
<path d="M541.2 85.0H551.0L546.1 90.0Z" fill="none" stroke="#a9a9a9" stroke-width="2" stroke-linejoin="round"/>
<defs><pattern id="hat" width="2.6" height="2.6" patternUnits="userSpaceOnUse" patternTransform="rotate(45)"><rect width="2.6" height="2.6" fill="#e6e6e6"/><rect width="1" height="2.6" fill="#9a9a9a"/></pattern></defs>
<rect x="613" y="83.2" width="20" height="8" fill="url(#hat)"/><path d="M613 75H633V91H613ZM613 83.2H633M619.6 75V83.2M626.6 75V83.2" fill="none" stroke="#3a3a3a" stroke-width="1.1"/><circle cx="632.4" cy="90.2" r="4.6" fill="#2f2f2f"/><path d="M632.4 87.4V93M629.6 90.2H635.2" stroke="#fff" stroke-width="1.3"/>
<path d="M642.5 85.1H652.1L647.3 89.6Z" fill="none" stroke="#2f2f2f" stroke-width="2" stroke-linejoin="round"/>
<rect x="706.5" y="74" width="11" height="17" fill="url(#hat)"/><path d="M697 74H717.5V91H697ZM706.5 74V91M697 80.4H706.5M697 85.5H706.5" fill="none" stroke="#3a3a3a" stroke-width="1.1"/><circle cx="715.6" cy="89.4" r="4.6" fill="#2f2f2f"/><path d="M715.6 86.6V92.2M712.8 89.4H718.4" stroke="#fff" stroke-width="1.3"/>
<path d="M726.1 84.5H735.9L731.0 88.9Z" fill="none" stroke="#2f2f2f" stroke-width="2" stroke-linejoin="round"/>
<rect x="784.1" y="74.1" width="25.9" height="22.8" fill="#2f2f2f"/><rect x="786.6" y="80" width="9.2" height="5.6" fill="#fff"/><rect x="797.9" y="80" width="9.6" height="5.6" fill="#fff"/><rect x="786.6" y="87.9" width="9.2" height="6.5" fill="#fff"/><rect x="797.9" y="87.9" width="9.6" height="6.5" fill="#fff"/>
<path d="M815.9 85.2H825.6L820.8 89.7Z" fill="none" stroke="#2f2f2f" stroke-width="2" stroke-linejoin="round"/>
<path d="M883.3 97.8V78.5M878.3 83.5L883.3 78.3L888.3 83.5M895.7 77.3V96.6M890.7 91.6L895.7 96.8L900.7 91.6" fill="none" stroke="#2f2f2f" stroke-width="2.1"/>
<rect x="962" y="80.1" width="18.5" height="5.9" fill="#2f2f2f"/><rect x="962" y="89.1" width="18.5" height="5.8" fill="#2f2f2f"/>
<path d="M1036.7 76.3L1048 80.6V94L1036.7 98.2L1025.4 94V80.6ZM1025.4 80.6L1036.7 85L1048 80.6M1036.7 85V98.2" fill="none" stroke="#2f2f2f" stroke-width="2.1" stroke-linejoin="round"/>
<rect x="1086.9" y="77" width="24.1" height="8.8" fill="#2f2f2f"/><path d="M1093.1 85.8V93.2H1099" fill="none" stroke="#2f2f2f" stroke-width="2"/><rect x="1099.2" y="90" width="11" height="6.8" fill="none" stroke="#2f2f2f" stroke-width="2"/>
<rect x="1188" y="76.2" width="22" height="21.8" fill="none" stroke="#2f2f2f" stroke-width="2"/><rect x="1187" y="75.2" width="24" height="11.4" fill="#2f2f2f"/><path d="M1195.3 81.3L1199 84.4L1204.2 78.6" fill="none" stroke="#fff" stroke-width="2.2"/><path d="M1195.3 89L1202.2 95.3M1202.2 89L1195.3 95.3" stroke="#2f2f2f" stroke-width="1.5"/>
<path d="M1292.5 76.4H1301.5L1305 80.5V92.2H1292.5Z" fill="none" stroke="#2f2f2f" stroke-width="2" stroke-linejoin="miter"/><path d="M1288.7 82H1285.9V98.7H1299V95" fill="none" stroke="#2f2f2f" stroke-width="2"/>
<path d="M1655 89A7.3 7.3 0 1 0 1655.6 97" fill="none" stroke="#2f2f2f" stroke-width="2.2"/><path d="M1657 85.3V92H1650.3" fill="none" stroke="#2f2f2f" stroke-width="2.3"/><path d="M1657 85.3L1657 92L1650.3 92Z" fill="#2f2f2f"/>
<circle cx="1686.9" cy="92.5" r="13.2" fill="none" stroke="#2f7556" stroke-width="2.6"/>
<path d="M1022.8 134.1V153.3L1027.3 149.2L1030 155.5L1032.4 154.5L1029.8 148.3H1037.6Z" fill="#fff" stroke="#000" stroke-width="1.1" stroke-linejoin="miter"/>
<circle cx="641.7" cy="168.8" r="2.9" fill="#d9dadd"/><circle cx="641.7" cy="176.3" r="2.9" fill="#d9dadd"/><circle cx="641.7" cy="183.8" r="2.9" fill="#d9dadd"/>
<path d="M752.6 176.8H770.6M761.6 167.8V185.8M755.6 173.8L752.6 176.8L755.6 179.8M767.6 173.8L770.6 176.8L767.6 179.8M758.6 170.8L761.6 167.8L764.6 170.8M758.6 182.8L761.6 185.8L764.6 182.8" fill="none" stroke="#dadbde" stroke-width="1.6"/>
<circle cx="787" cy="168.8" r="2.9" fill="#d9dadd"/><circle cx="787" cy="176.3" r="2.9" fill="#d9dadd"/><circle cx="787" cy="183.8" r="2.9" fill="#d9dadd"/>
<path d="M917.2 176.8H935.2M926.2 167.8V185.8M920.2 173.8L917.2 176.8L920.2 179.8M932.2 173.8L935.2 176.8L932.2 179.8M923.2 170.8L926.2 167.8L929.2 170.8M923.2 182.8L926.2 185.8L929.2 182.8" fill="none" stroke="#dadbde" stroke-width="1.6"/>
<circle cx="951" cy="168.8" r="2.9" fill="#d9dadd"/><circle cx="951" cy="176.3" r="2.9" fill="#d9dadd"/><circle cx="951" cy="183.8" r="2.9" fill="#d9dadd"/>
<path d="M1078.8 176.8H1096.8M1087.8 167.8V185.8M1081.8 173.8L1078.8 176.8L1081.8 179.8M1093.8 173.8L1096.8 176.8L1093.8 179.8M1084.8 170.8L1087.8 167.8L1090.8 170.8M1084.8 182.8L1087.8 185.8L1090.8 182.8" fill="none" stroke="#dadbde" stroke-width="1.6"/>
<circle cx="1113.2" cy="168.8" r="2.9" fill="#d9dadd"/><circle cx="1113.2" cy="176.3" r="2.9" fill="#d9dadd"/><circle cx="1113.2" cy="183.8" r="2.9" fill="#d9dadd"/>
<path d="M1256.5 176.8H1274.5M1265.5 167.8V185.8M1259.5 173.8L1256.5 176.8L1259.5 179.8M1271.5 173.8L1274.5 176.8L1271.5 179.8M1262.5 170.8L1265.5 167.8L1268.5 170.8M1262.5 182.8L1265.5 185.8L1268.5 182.8" fill="none" stroke="#dadbde" stroke-width="1.6"/>
<circle cx="1290.8" cy="168.8" r="2.9" fill="#d9dadd"/><circle cx="1290.8" cy="176.3" r="2.9" fill="#d9dadd"/><circle cx="1290.8" cy="183.8" r="2.9" fill="#d9dadd"/>
<path d="M1575.3 176.8H1593.3M1584.3 167.8V185.8M1578.3 173.8L1575.3 176.8L1578.3 179.8M1590.3 173.8L1593.3 176.8L1590.3 179.8M1581.3 170.8L1584.3 167.8L1587.3 170.8M1581.3 182.8L1584.3 185.8L1587.3 182.8" fill="none" stroke="#dadbde" stroke-width="1.6"/>
<circle cx="1609.4" cy="168.8" r="2.9" fill="#d9dadd"/><circle cx="1609.4" cy="176.3" r="2.9" fill="#d9dadd"/><circle cx="1609.4" cy="183.8" r="2.9" fill="#d9dadd"/>
<g fill="#3f7a5c" stroke="#3f7a5c" stroke-width="1.2" stroke-linejoin="round"><path d="M780.6 740.6L790.4 731.4V749.9Z"/><path d="M790.7 740.6L800.5 731.4V749.9Z"/><path d="M824.3 740.6L834 731.4V749.9Z"/><path d="M985.2 740.6L974.6 731V750.3Z"/><path d="M1018 740.6L1007.7 731V750.3Z"/><path d="M1028.3 740.6L1018 731V750.3Z"/><path d="M1058.6 740.6L1050.1 731V750.3Z"/><rect x="1059.3" y="731" width="3.4" height="19.3"/></g>
<path d="M1093.6 737.6A7.6 7.6 0 0 1 1106.6 734.6M1108.4 740.3A7.6 7.6 0 0 1 1095.4 743.3" fill="none" stroke="#3f7a5c" stroke-width="2.6"/><path d="M1108.8 732.2V737.7H1103.3Z M1093.2 746V740.3H1098.8Z" fill="#3f7a5c" stroke="#3f7a5c" stroke-width="1"/>
<rect x="1141.3" y="732.6" width="8" height="7.2" fill="none" stroke="#3f7a5c" stroke-width="1.3"/><rect x="1140.6" y="731.9" width="9.2" height="2.2" fill="#3f7a5c"/><path d="M1143.3 730V732M1147.5 730V732" stroke="#3f7a5c" stroke-width="1.2"/><rect x="1146.6" y="738.2" width="11.8" height="11.9" rx="1" fill="#fdfdfc" stroke="#3f7a5c" stroke-width="1.7"/><rect x="1145.8" y="737.3" width="13.3" height="3.9" fill="#3f7a5c"/><path d="M1149.6 735.2V737.5M1155.4 735.2V737.5" stroke="#3f7a5c" stroke-width="1.4"/><path d="M1138 738.3Q1134.6 740.5 1135.8 743.5Q1137 745.3 1140 745.1H1142" fill="none" stroke="#3f7a5c" stroke-width="1.4"/><path d="M1144 745.1L1141.2 743V747.2Z" fill="#3f7a5c"/>
<path d="M964.5 769.5H975.5M964.5 773H975.5" stroke="#444" stroke-width="1.4"/>
<path d="M231.6 788V804.2H250.5" fill="none" stroke="#437a60" stroke-width="1.6"/><path d="M234.6 801.5V796.5L238.5 791.7L242 795.3L245 792.5L248.6 796.5V801.5Z" fill="none" stroke="#437a60" stroke-width="1.6" stroke-linejoin="round"/>
<path d="M1588.82 787.35 L1590.38 787.35 L1591.25 789.31 L1592.23 789.87 L1594.36 789.65 L1595.14 791.00 L1593.88 792.74 L1593.88 793.86 L1595.14 795.60 L1594.36 796.95 L1592.23 796.73 L1591.25 797.29 L1590.38 799.25 L1588.82 799.25 L1587.95 797.29 L1586.97 796.73 L1584.84 796.95 L1584.06 795.60 L1585.32 793.86 L1585.32 792.74 L1584.06 791.00 L1584.84 789.65 L1586.97 789.87 L1587.95 789.31Z" fill="#fff" stroke="#2e2e2e" stroke-width="1.5" stroke-linejoin="round"/><circle cx="1589.6" cy="793.3" r="1.5" fill="#2e2e2e"/>
<path d="M1608.15 799.08 L1608.15 800.72 L1606.09 801.64 L1605.50 802.66 L1605.74 804.90 L1604.31 805.72 L1602.49 804.40 L1601.31 804.40 L1599.49 805.72 L1598.06 804.90 L1598.30 802.66 L1597.71 801.64 L1595.65 800.72 L1595.65 799.08 L1597.71 798.16 L1598.30 797.14 L1598.06 794.90 L1599.49 794.08 L1601.31 795.40 L1602.49 795.40 L1604.31 794.08 L1605.74 794.90 L1605.50 797.14 L1606.09 798.16Z" fill="#fff" stroke="#2e2e2e" stroke-width="1.5" stroke-linejoin="round"/><circle cx="1601.9" cy="799.9" r="1.5" fill="#2e2e2e"/>
<g transform="translate(255,822.8)"><path d="M11.8 19.3Q12.3 11.5 17.5 7.3Q20.5 5 24.4 5.3Q24.8 9.8 22.3 13.7Q18.8 18.6 11.8 19.3Z" fill="#fdfdfc" stroke="#437a60" stroke-width="1.8" stroke-linejoin="round"/><circle cx="19.3" cy="10.4" r="1.6" fill="#437a60"/><path d="M8.3 10H13.6L10.6 16.3L5.2 15.6Z" fill="#437a60"/><path d="M13.9 19.3L19.6 16.3L19.8 21.4L14.2 24.3Z" fill="#437a60"/><path d="M9.6 17L12.4 20" stroke="#437a60" stroke-width="1.8"/></g>
<path d="M330.6 833.6L342.8 845.6M342.8 833.6L330.6 845.6" stroke="#333" stroke-width="1.5"/>
<rect x="359.2" y="831.9" width="15.2" height="15.0" fill="none" stroke="#2e2e2e" stroke-width="1.8"/>
<path d="M431 837.5L436.5 832.2L442 837.5ZM431 841.2L436.5 846.5L442 841.2Z" fill="none" stroke="#555" stroke-width="1.8" stroke-linejoin="round"/>
<path d="M524 837.5L529.5 832.2L535 837.5ZM524 841.2L529.5 846.5L535 841.2Z" fill="none" stroke="#555" stroke-width="1.8" stroke-linejoin="round"/>
<path d="M1395 837.5L1400.5 832.2L1406 837.5ZM1395 841.2L1400.5 846.5L1406 841.2Z" fill="none" stroke="#555" stroke-width="1.8" stroke-linejoin="round"/>
<path d="M1469 837.5L1474.5 832.2L1480 837.5ZM1469 841.2L1474.5 846.5L1480 841.2Z" fill="none" stroke="#555" stroke-width="1.8" stroke-linejoin="round"/>
<path d="M1565.3 837.5L1570.6 832.2L1576 837.5Z" fill="none" stroke="#437a60" stroke-width="1.8" stroke-linejoin="round"/>
<rect x="1672" y="827" width="11" height="17" fill="url(#hat)"/><path d="M1661.5 826.8H1683V844H1661.5ZM1672 826.8V844M1661.5 832.5H1672M1661.5 838.3H1672" fill="none" stroke="#666" stroke-width="1"/><circle cx="1680.9" cy="842.6" r="3.8" fill="#222"/><path d="M1680.9 840.3V844.9M1678.6 842.6H1683.2" stroke="#fff" stroke-width="1.1"/>
<g transform="translate(255,860.0)"><path d="M11.8 19.3Q12.3 11.5 17.5 7.3Q20.5 5 24.4 5.3Q24.8 9.8 22.3 13.7Q18.8 18.6 11.8 19.3Z" fill="#fdfdfc" stroke="#437a60" stroke-width="1.8" stroke-linejoin="round"/><circle cx="19.3" cy="10.4" r="1.6" fill="#437a60"/><path d="M8.3 10H13.6L10.6 16.3L5.2 15.6Z" fill="#437a60"/><path d="M13.9 19.3L19.6 16.3L19.8 21.4L14.2 24.3Z" fill="#437a60"/><path d="M9.6 17L12.4 20" stroke="#437a60" stroke-width="1.8"/></g>
<circle cx="308" cy="873.4" r="9" fill="none" stroke="#437a60" stroke-width="1.7"/><circle cx="308" cy="869.4" r="1.3" fill="#437a60"/><path d="M306 871.9H308.6V877.7M305.6 877.8H311" fill="none" stroke="#437a60" stroke-width="1.7"/>
<path d="M331 868.0L343 879.5M343 868.0L331 879.5" stroke="#437a60" stroke-width="1.6"/>
<rect x="359.29999999999995" y="866.1999999999999" width="15.2" height="15.0" fill="none" stroke="#2e2e2e" stroke-width="1.8"/>
<rect x="390.4" y="861.9" width="7.8" height="20.8" rx="1.5" fill="#9e6892"/><rect x="399.6" y="861.9" width="7.8" height="20.8" rx="1.5" fill="#9e6892"/>
<path d="M390.40 873.13 L392.20 875.42 L394.47 864.60 L396.58 880.20 L398.22 877.92" fill="none" stroke="#fff" stroke-width="1.6" stroke-linejoin="round" stroke-linecap="round"/>
<path d="M399.58 873.13 L401.38 875.42 L403.65 864.60 L405.76 880.20 L407.40 877.92" fill="none" stroke="#fff" stroke-width="1.6" stroke-linejoin="round" stroke-linecap="round"/>
<g transform="translate(255,893.85)"><path d="M11.8 19.3Q12.3 11.5 17.5 7.3Q20.5 5 24.4 5.3Q24.8 9.8 22.3 13.7Q18.8 18.6 11.8 19.3Z" fill="#fdfdfc" stroke="#437a60" stroke-width="1.8" stroke-linejoin="round"/><circle cx="19.3" cy="10.4" r="1.6" fill="#437a60"/><path d="M8.3 10H13.6L10.6 16.3L5.2 15.6Z" fill="#437a60"/><path d="M13.9 19.3L19.6 16.3L19.8 21.4L14.2 24.3Z" fill="#437a60"/><path d="M9.6 17L12.4 20" stroke="#437a60" stroke-width="1.8"/></g>
<circle cx="308" cy="907.2" r="9" fill="none" stroke="#437a60" stroke-width="1.7"/><circle cx="308" cy="903.2" r="1.3" fill="#437a60"/><path d="M306 905.8H308.6V911.6M305.6 911.6H311" fill="none" stroke="#437a60" stroke-width="1.7"/>
<path d="M331 901.85L343 913.35M343 901.85L331 913.35" stroke="#437a60" stroke-width="1.6"/>
<rect x="359.29999999999995" y="900.05" width="15.2" height="15.0" fill="none" stroke="#2e2e2e" stroke-width="1.8"/>
<path d="M389.5 916.4H395.8M400.2 916.4H407M392 916.4L398 900.3L404.6 916.4M394 909.7H402.4" fill="none" stroke="#8b6443" stroke-width="1.5"/>
<g transform="translate(255,927.7)"><path d="M11.8 19.3Q12.3 11.5 17.5 7.3Q20.5 5 24.4 5.3Q24.8 9.8 22.3 13.7Q18.8 18.6 11.8 19.3Z" fill="#fdfdfc" stroke="#437a60" stroke-width="1.8" stroke-linejoin="round"/><circle cx="19.3" cy="10.4" r="1.6" fill="#437a60"/><path d="M8.3 10H13.6L10.6 16.3L5.2 15.6Z" fill="#437a60"/><path d="M13.9 19.3L19.6 16.3L19.8 21.4L14.2 24.3Z" fill="#437a60"/><path d="M9.6 17L12.4 20" stroke="#437a60" stroke-width="1.8"/></g>
<circle cx="308" cy="941.1" r="9" fill="none" stroke="#437a60" stroke-width="1.7"/><circle cx="308" cy="937.1" r="1.3" fill="#437a60"/><path d="M306 939.6H308.6V945.4M305.6 945.5H311" fill="none" stroke="#437a60" stroke-width="1.7"/>
<path d="M331 935.7L343 947.2M343 935.7L331 947.2" stroke="#437a60" stroke-width="1.6"/>
<rect x="359.29999999999995" y="933.9" width="15.2" height="15.0" fill="none" stroke="#2e2e2e" stroke-width="1.8"/>
<path d="M389.5 950.2H395.8M400.2 950.2H407M392 950.2L398 934.1L404.6 950.2M394 943.6H402.4" fill="none" stroke="#5b7bc8" stroke-width="1.5"/>
<g transform="translate(255,961.55)"><path d="M11.8 19.3Q12.3 11.5 17.5 7.3Q20.5 5 24.4 5.3Q24.8 9.8 22.3 13.7Q18.8 18.6 11.8 19.3Z" fill="#fdfdfc" stroke="#437a60" stroke-width="1.8" stroke-linejoin="round"/><circle cx="19.3" cy="10.4" r="1.6" fill="#437a60"/><path d="M8.3 10H13.6L10.6 16.3L5.2 15.6Z" fill="#437a60"/><path d="M13.9 19.3L19.6 16.3L19.8 21.4L14.2 24.3Z" fill="#437a60"/><path d="M9.6 17L12.4 20" stroke="#437a60" stroke-width="1.8"/></g>
<circle cx="308" cy="975.0" r="9" fill="none" stroke="#437a60" stroke-width="1.7"/><circle cx="308" cy="971.0" r="1.3" fill="#437a60"/><path d="M306 973.5H308.6V979.2M305.6 979.3H311" fill="none" stroke="#437a60" stroke-width="1.7"/>
<path d="M331 969.55L343 981.05M343 969.55L331 981.05" stroke="#437a60" stroke-width="1.6"/>
<rect x="359.29999999999995" y="967.7499999999999" width="15.2" height="15.0" fill="none" stroke="#2e2e2e" stroke-width="1.8"/>
<path d="M389.5 984.1H395.8M400.2 984.1H407M392 984.1L398 968.0L404.6 984.1M394 977.4H402.4" fill="none" stroke="#9a4527" stroke-width="1.5"/>
<g transform="translate(255,995.4)"><path d="M11.8 19.3Q12.3 11.5 17.5 7.3Q20.5 5 24.4 5.3Q24.8 9.8 22.3 13.7Q18.8 18.6 11.8 19.3Z" fill="#fdfdfc" stroke="#437a60" stroke-width="1.8" stroke-linejoin="round"/><circle cx="19.3" cy="10.4" r="1.6" fill="#437a60"/><path d="M8.3 10H13.6L10.6 16.3L5.2 15.6Z" fill="#437a60"/><path d="M13.9 19.3L19.6 16.3L19.8 21.4L14.2 24.3Z" fill="#437a60"/><path d="M9.6 17L12.4 20" stroke="#437a60" stroke-width="1.8"/></g>
<circle cx="308" cy="1008.8" r="9" fill="none" stroke="#437a60" stroke-width="1.7"/><circle cx="308" cy="1004.8" r="1.3" fill="#437a60"/><path d="M306 1007.3H308.6V1013.1M305.6 1013.2H311" fill="none" stroke="#437a60" stroke-width="1.7"/>
<path d="M331 1003.4L343 1014.9M343 1003.4L331 1014.9" stroke="#437a60" stroke-width="1.6"/>
<rect x="359.29999999999995" y="1001.5999999999999" width="15.2" height="15.0" fill="none" stroke="#2e2e2e" stroke-width="1.8"/>
<path d="M389.5 1017.9H395.8M400.2 1017.9H407M392 1017.9L398 1001.8L404.6 1017.9M394 1011.2H402.4" fill="none" stroke="#d4aa4e" stroke-width="1.5"/>
<g transform="translate(255,1029.25)"><path d="M11.8 19.3Q12.3 11.5 17.5 7.3Q20.5 5 24.4 5.3Q24.8 9.8 22.3 13.7Q18.8 18.6 11.8 19.3Z" fill="#fdfdfc" stroke="#437a60" stroke-width="1.8" stroke-linejoin="round"/><circle cx="19.3" cy="10.4" r="1.6" fill="#437a60"/><path d="M8.3 10H13.6L10.6 16.3L5.2 15.6Z" fill="#437a60"/><path d="M13.9 19.3L19.6 16.3L19.8 21.4L14.2 24.3Z" fill="#437a60"/><path d="M9.6 17L12.4 20" stroke="#437a60" stroke-width="1.8"/></g>
<circle cx="308" cy="1042.7" r="9" fill="none" stroke="#437a60" stroke-width="1.7"/><circle cx="308" cy="1038.7" r="1.3" fill="#437a60"/><path d="M306 1041.2H308.6V1047.0M305.6 1047.0H311" fill="none" stroke="#437a60" stroke-width="1.7"/>
<path d="M331 1037.25L343 1048.75M343 1037.25L331 1048.75" stroke="#437a60" stroke-width="1.6"/>
<rect x="359.29999999999995" y="1035.45" width="15.2" height="15.0" fill="none" stroke="#2e2e2e" stroke-width="1.8"/>
<path d="M388.8 1044.4L392.3 1031.8L398.1 1046.3L400.4 1038.8L404.4 1050.0L408.4 1043.9" fill="none" stroke="#5e5aa8" stroke-width="2.1" stroke-linejoin="round"/>
<g transform="translate(255,1063.1)"><path d="M11.8 19.3Q12.3 11.5 17.5 7.3Q20.5 5 24.4 5.3Q24.8 9.8 22.3 13.7Q18.8 18.6 11.8 19.3Z" fill="#fdfdfc" stroke="#437a60" stroke-width="1.8" stroke-linejoin="round"/><circle cx="19.3" cy="10.4" r="1.6" fill="#437a60"/><path d="M8.3 10H13.6L10.6 16.3L5.2 15.6Z" fill="#437a60"/><path d="M13.9 19.3L19.6 16.3L19.8 21.4L14.2 24.3Z" fill="#437a60"/><path d="M9.6 17L12.4 20" stroke="#437a60" stroke-width="1.8"/></g>
<circle cx="308" cy="1076.5" r="9" fill="none" stroke="#437a60" stroke-width="1.7"/><circle cx="308" cy="1072.5" r="1.3" fill="#437a60"/><path d="M306 1075.0H308.6V1080.8M305.6 1080.9H311" fill="none" stroke="#437a60" stroke-width="1.7"/>
<path d="M331 1071.1L343 1082.6M343 1071.1L331 1082.6" stroke="#437a60" stroke-width="1.6"/>
<rect x="359.29999999999995" y="1069.3000000000002" width="15.2" height="15.0" fill="none" stroke="#2e2e2e" stroke-width="1.8"/>
<path d="M388.8 1078.2L392.3 1065.7L398.1 1080.2L400.4 1072.7L404.4 1083.8L408.4 1077.8" fill="none" stroke="#e07b35" stroke-width="2.1" stroke-linejoin="round"/>
<g transform="translate(222.2 883.1) rotate(-45)"><path d="M0.8 0L6 -2.6H23.2V2.6H6Z" fill="#f7f8f9" stroke="#437a60" stroke-width="1.7" stroke-linejoin="round"/><rect x="19" y="-3.4" width="5" height="6.8" fill="#437a60"/><path d="M6 -2.6V2.6" stroke="#437a60" stroke-width="1.5"/><path d="M9.5 -0.1H16.5" stroke="#437a60" stroke-width="1.1"/><path d="M0 0L2.5 -1.3V1.3Z" fill="#437a60"/></g></svg>
</body></html>
